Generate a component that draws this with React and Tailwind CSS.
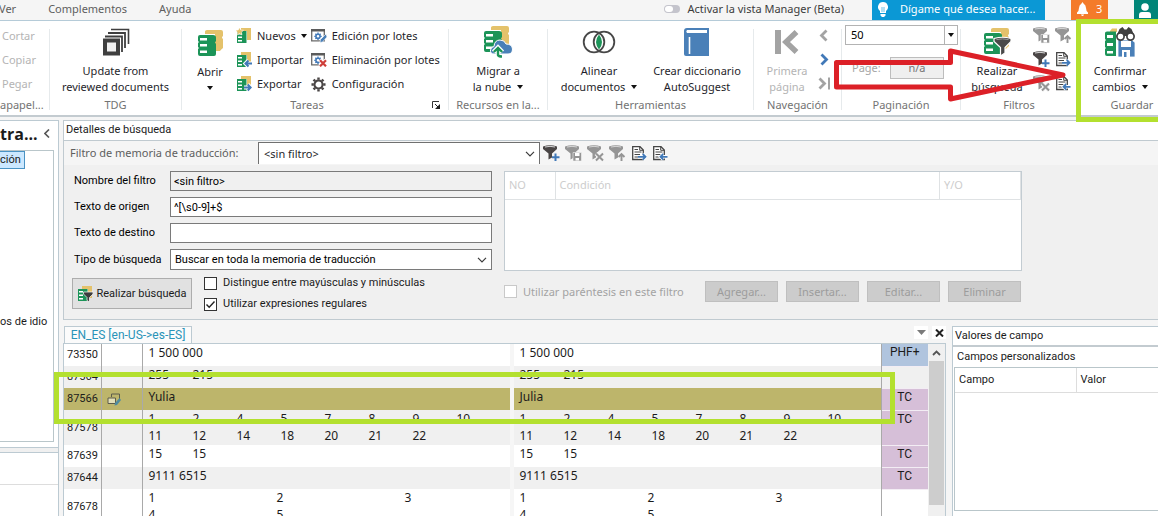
const UI = "font-['Noto_Sans',sans-serif]";
const FORM = "font-['Roboto',sans-serif]";

/* ---------- icons ---------- */

function MemoryShapes() {
  return (
    <>
      <path d="M7 1.500 Q7 0 9 0 H23 Q25 0 25 2 V6 Q23 7.500 25 9 V18 Q23 19.500 22 21 H17 V4 H7 Z" fill="#e4c26b" />
      <path d="M0 7 Q0 5 2 5 H15 Q18 5 18 7.500 V11 L17 12.500 L18 14 V24 Q18 26 16 26 H2 Q0 26 0 24 V19 L1 18 L0 17 V13 L1 12 L0 11 Z" fill="#1c9458" />
      <path d="M2 8 H9 V10.500 H2 Z M2 14 H9 V16.500 H2 Z M2 20.500 H9 V23 H2 Z" fill="#fff" />
    </>
  );
}

function MemoryIcon() {
  return (
    <svg width="25" height="26" viewBox="0 0 25 26" aria-hidden="true">
      <MemoryShapes />
    </svg>
  );
}

function SmallMemoryIcon({ badge }) {
  return (
    <svg width="16" height="16" viewBox="0 0 16 16" aria-hidden="true">
      <path d="M5 0 H15 V12 H11 V3 H5 Z" fill="#e4c26b" />
      <path d="M1 3 H10.500 V15 H1 Z" fill="#1c9458" />
      <path d="M2 5 H6 V6.500 H2 Z M2 8.500 H6 V10 H2 Z M2 12 H6 V13.500 H2 Z" fill="#fff" />
      {badge === "star" && (
        <path d="M3.500 -0.500 L4.700 2 L7.500 2.300 L5.500 4.200 L6 7 L3.500 5.600 L1 7 L1.500 4.200 L-0.500 2.300 L2.300 2 Z" fill="#e4c26b" stroke="#fff" strokeWidth="0.500" />
      )}
      {badge === "in" && (
        <>
          <path d="M16 11.500 H10 M12.500 8.500 L9.500 11.500 L12.500 14.500" fill="none" stroke="#fff" strokeWidth="4" />
          <path d="M16 11.500 H10 M12.500 8.500 L9.500 11.500 L12.500 14.500" fill="none" stroke="#4179b8" strokeWidth="2" />
        </>
      )}
      {badge === "out" && (
        <>
          <path d="M8 11.500 H14.500 M11.700 8.500 L14.700 11.500 L11.700 14.500" fill="none" stroke="#fff" strokeWidth="4" />
          <path d="M8 11.500 H14.500 M11.700 8.500 L14.700 11.500 L11.700 14.500" fill="none" stroke="#4179b8" strokeWidth="2" />
        </>
      )}
      {badge === "filter" && (
        <path d="M6.500 6 H16 V8 L12.500 11.500 V16 L10 14.500 V11.500 L6.500 8 Z" fill="#3c3c3c" stroke="#fff" strokeWidth="0.700" />
      )}
    </svg>
  );
}

function UpdateIcon() {
  return (
    <svg width="28" height="28" viewBox="0 0 28 28" aria-hidden="true" fill="none" stroke="#3f3f3f">
      <path d="M9 1.500 H26.500 V16" strokeWidth="1.600" />
      <path d="M6 5 H23 V20" strokeWidth="1.800" />
      <path d="M3 8.500 H20 V24" strokeWidth="1.800" />
      <rect x="3" y="12.500" width="13" height="13" strokeWidth="4" fill="#f0f0f0" />
    </svg>
  );
}

function CloudIcon() {
  return (
    <svg width="29" height="33" viewBox="0 0 29 33" aria-hidden="true">
      <MemoryShapes />
      <path d="M10 28 Q6 28 6.500 24 Q7 21 10 20.500 Q10.500 14 16 14 Q20.500 14 22 18 Q28 18 28.500 23 Q28.500 28 24 28 H12 Z" fill="#4a80b8" stroke="#fff" strokeWidth="1" />
      <path d="M9.500 26 L14 21.500 L18.500 26 M14 22 V29 Q14.500 30.500 18 30.500" fill="none" stroke="#fff" strokeWidth="4.500" />
      <path d="M9.800 26 L14 22 L18.200 26 M14 22.500 V29 Q14.500 30.500 18 30.500" fill="none" stroke="#1c9458" strokeWidth="2.400" />
    </svg>
  );
}

function AlignIcon() {
  return (
    <svg width="34" height="24" viewBox="0 0 34 24" aria-hidden="true" fill="none" stroke="#474747" strokeWidth="1.800">
      <path d="M17 4.500 Q23 12 17 19.500 Q11 12 17 4.500 Z" fill="#1c9458" stroke="none" />
      <circle cx="12" cy="12" r="10.300" />
      <circle cx="22" cy="12" r="10.300" />
    </svg>
  );
}

function BookIcon() {
  return (
    <svg width="26" height="28" viewBox="0 0 26 28" aria-hidden="true">
      <path d="M3 0 H25 V28 H2 Q0 28 0 26 V3 Q0 0 3 0 Z" fill="#4a80b8" />
      <path d="M3 2 H23 V5 H3 Q1.500 3.500 3 2 Z" fill="#fff" />
      <path d="M5.500 9 V26" stroke="#fff" strokeWidth="1.600" />
    </svg>
  );
}

function FirstPageIcon() {
  return (
    <svg width="24" height="24" viewBox="0 0 24 24" aria-hidden="true">
      <path d="M0 0 H6 V24 H0 Z" fill="#a3a3a3" />
      <path d="M21.500 2 L11 12 L21.500 22" fill="none" stroke="#a3a3a3" strokeWidth="5.500" />
    </svg>
  );
}

function Chevron({ dir, color, bar = false }) {
  return (
    <svg width="13" height="13" viewBox="0 0 13 13" aria-hidden="true" fill="none" stroke={color} strokeWidth="2.800">
      {dir === "left" ? <path d="M8.500 1.500 L3.500 6.500 L8.500 11.500" /> : <path d={bar ? "M1.500 1.500 L6.500 6.500 L1.500 11.500" : "M3.500 1.500 L8.500 6.500 L3.500 11.500"} />}
      {bar && <path d="M11 0.500 V12.500" strokeWidth="2" />}
    </svg>
  );
}

function SearchFilterIcon() {
  return (
    <svg width="27" height="28" viewBox="0 0 27 28" aria-hidden="true">
      <MemoryShapes />
      <path d="M10 10.500 Q18.500 8 27 10.500 V13.500 L21 19.500 V25 L16.500 28 V19.500 L10 13.500 Z" fill="#4a4a4a" stroke="#fff" strokeWidth="1.200" />
      <path d="M12.500 11.500 Q18.500 10.300 24.500 11.500" fill="none" stroke="#9a9a9a" />
    </svg>
  );
}

function FilterIcon({ badge }) {
  const tone = badge === "add" ? "#4a4646" : "#959595";
  return (
    <svg width="17" height="17" viewBox="0 0 17 17" aria-hidden="true">
      <path d="M0 1.500 Q7 -1 14 1.500 V4 L9 8.500 V12.500 L5.500 14.500 V8.500 L0 4 Z" fill={tone} />
      <path d="M2 2 Q7 0.700 12 2" fill="none" stroke="#d6d6d6" strokeWidth="1" />
      {badge === "add" && <path d="M12.500 8.500 V16 M9 12.200 H16.500" stroke="#4179b8" strokeWidth="2" />}
      {badge === "save" && (
        <>
          <path d="M8 7.500 H16.500 V16 H8 Z" fill="#959595" stroke="#f5f5f5" strokeWidth="0.600" />
          <path d="M10 8 H14.500 V11 H10 Z M10.500 13 H14 V15.500 H10.500 Z" fill="#fff" />
        </>
      )}
      {badge === "clear" && (
        <>
          <path d="M9 8.500 L16 15.500 M16 8.500 L9 15.500" stroke="#f5f5f5" strokeWidth="4" />
          <path d="M9 8.500 L16 15.500 M16 8.500 L9 15.500" stroke="#959595" strokeWidth="2" />
        </>
      )}
      {badge === "up" && <path d="M12.500 16 V9 M9.500 12 L12.500 9 L15.500 12" fill="none" stroke="#959595" strokeWidth="1.900" />}
    </svg>
  );
}

function DocIcon({ dir }) {
  const arrow = dir === "out" ? "M7 11.800 H14.500 M11.700 9 L14.500 11.800 L11.700 14.600" : "M15.500 11.800 H8.500 M11.300 9 L8.500 11.800 L11.300 14.600";
  return (
    <svg width="16" height="17" viewBox="0 0 16 17" aria-hidden="true" fill="none">
      <path d="M1.700 1.700 H9 L12.300 5 V14.500 H1.700 Z" fill="#fff" stroke="#454545" strokeWidth="1.300" />
      <path d="M8.700 1.700 V5.300 H12" stroke="#454545" />
      <path d="M3.500 4.500 H7 M3.500 7 H10.500 M3.500 9.500 H9 M3.500 12 H8" stroke="#454545" />
      <path d={arrow} stroke="#fff" strokeWidth="3.500" />
      <path d={arrow} stroke="#4179b8" strokeWidth="1.800" />
    </svg>
  );
}

function SaveChangesIcon() {
  return (
    <svg width="30" height="30" viewBox="0 0 30 30" aria-hidden="true">
      <path d="M5 4 L7 1.500 H12 V5 H5 Z" fill="#e4c26b" />
      <path d="M0 6 Q0 4.500 2 4.500 H11 V29 H2 Q0 29 0 27 V22 L1 21 L0 20 V14 L1 13 L0 12 Z" fill="#1c9458" />
      <path d="M2 8 H8 V11 H2 Z M2 16 H8 V19 H2 Z M2 24 H8 V26.500 H2 Z" fill="#fff" />
      <path d="M13 13 H27 L30 15.500 V30 H13 Z" fill="#4a80b8" stroke="#fff" strokeWidth="0.800" />
      <path d="M16 14 H26 V20 H16 Z M17 23 H25 V30 H17 Z" fill="#fff" />
      <path d="M19 25 H21.500 V30 H19 Z" fill="#4a80b8" />
      <path d="M14.500 2 L17.500 0 L19.500 2.500 H21.500 L23.500 0 L26.500 2 L29.500 9 H11.500 Z" fill="#3f3f3f" />
      <circle cx="15.500" cy="9.500" r="3.600" fill="#fff" stroke="#3f3f3f" strokeWidth="1.700" />
      <circle cx="25.500" cy="9.500" r="3.600" fill="#fff" stroke="#3f3f3f" strokeWidth="1.700" />
    </svg>
  );
}

function GearIcon() {
  return (
    <svg width="15" height="15" viewBox="0 0 16 16" aria-hidden="true" fill="none" stroke="#4a4646">
      <circle cx="8" cy="8" r="4.300" strokeWidth="2.200" />
      <path d="M8 0.500 V3 M8 13 V15.500 M0.500 8 H3 M13 8 H15.500 M2.700 2.700 L4.500 4.500 M11.500 11.500 L13.300 13.300 M2.700 13.300 L4.500 11.500 M11.500 4.500 L13.300 2.700" strokeWidth="2.600" />
    </svg>
  );
}

function BatchIcon({ remove = false }) {
  return (
    <svg width="16" height="14" viewBox="0 0 16 14" aria-hidden="true">
      <path d="M0.700 0.700 H13.300 V11.800 H0.700 Z" fill="#fff" stroke="#6b6b6b" strokeWidth="1.300" />
      <path d="M0 0 H14 V2.500 H0 Z" fill="#5b5b5b" />
      <circle cx="7" cy="7.300" r="2.100" fill="none" stroke="#4179b8" strokeWidth="1.600" />
      <path d="M7 3.600 V5 M7 9.600 V11 M3.300 7.300 H4.700 M9.300 7.300 H10.700 M4.400 4.700 L5.400 5.700 M4.400 9.900 L5.400 8.900 M9.600 4.700 L8.600 5.700" stroke="#4179b8" strokeWidth="1.300" />
      {remove ? (
        <>
          <path d="M8.500 7 L15 13.300 M15 7 L8.500 13.300" stroke="#fff" strokeWidth="3.500" />
          <path d="M9 7.300 L15 13.300 M15 7.300 L9 13.300" stroke="#cf3f3a" strokeWidth="2.200" />
        </>
      ) : (
        <path d="M15 5 L9.500 10.500 L9 13.500 L11.500 13 L16 8 Z" fill="#4a80b8" stroke="#fff" strokeWidth="0.600" />
      )}
    </svg>
  );
}

function Caret() {
  return (
    <svg width="6" height="4" viewBox="0 0 6 4" aria-hidden="true" className="inline-block shrink-0">
      <path d="M0 0 H6 L3 4 Z" fill="#111" />
    </svg>
  );
}

function DownArrow() {
  return (
    <svg width="10" height="6" viewBox="0 0 10 6" aria-hidden="true" className="pointer-events-none absolute top-1/2 right-1 -translate-y-1/2">
      <path d="M1 0.800 L5 4.800 L9 0.800" fill="none" stroke="#3b3b3b" strokeWidth="1.200" />
    </svg>
  );
}

/* ---------- ribbon ---------- */

function Group({ label, width, children, launcher = false, labelClass = "text-center" }) {
  return (
    <section className={`flex shrink-0 flex-col ${width}`}>
      <div className="flex h-[75px] min-w-0">{children}</div>
      <div className="flex h-[18px] items-center overflow-hidden leading-[18px] text-[#737373]">
        <span className={`flex-1 whitespace-nowrap ${labelClass}`}>{label}</span>
        {launcher && (
          <button aria-label="Tareas" className="mr-2 flex">
            <svg width="8" height="8" viewBox="0 0 8 8" aria-hidden="true">
              <path d="M0.500 7 V0.500 H7" fill="none" stroke="#333" />
              <path d="M8 3 V8 H3 Z" fill="#222" />
              <path d="M3 3 L6 6" stroke="#222" />
            </svg>
          </button>
        )}
      </div>
    </section>
  );
}

function Divider() {
  return <div className="mt-2 h-[81px] w-px shrink-0 bg-[#e6eaec]" />;
}

function BigButton({ icon, lines, caret = false, muted = false, className = "" }) {
  return (
    <button className={`flex flex-col items-center leading-4 whitespace-nowrap ${muted ? "text-[#b4b4b4]" : "text-[#1f1f2b]"} ${className}`}>
      <span className="flex h-[42px] items-center justify-center">{icon}</span>
      {lines.map((line, i) => (
        <span key={line} className="flex h-4 items-center gap-[6px]">
          {line}
          {caret && i === lines.length - 1 && lines.length > 1 && <Caret />}
        </span>
      ))}
      {caret && lines.length === 1 && (
        <span className="flex h-4 items-center">
          <Caret />
        </span>
      )}
    </button>
  );
}

function RowButton({ icon, children, caret = false }) {
  return (
    <button className="flex h-6 items-center gap-[5px] whitespace-nowrap text-[#1f1f2b]">
      <span className="flex w-4 justify-center">{icon}</span>
      {children}
      {caret && <Caret />}
    </button>
  );
}

function TopBar() {
  return (
    <header className="flex h-[21px] shrink-0 items-stretch border-b border-[#b5cbd8] bg-[#f5f5f5] text-[#5e5e5e]">
      <nav className="-ml-px flex gap-8 leading-[18px]">
        <a href="#ver">Ver</a>
        <a href="#complementos">Complementos</a>
        <a href="#ayuda">Ayuda</a>
      </nav>
      <label className="mr-7 ml-auto flex items-center gap-2 pb-[2px] text-[#3c3c3c]">
        <input type="checkbox" role="switch" className="peer sr-only" />
        <span className="flex h-2 w-4 justify-start rounded-full bg-[#c4c4cc] p-px">
          <span className="h-[6px] w-2 rounded-full bg-white" />
        </span>
        Activar la vista Manager (Beta)
      </label>
      <button className="flex w-[173px] items-center gap-3 bg-[#0b98d5] pb-[2px] pl-[6px] text-white">
        <svg width="10" height="15" viewBox="0 0 10 15" aria-hidden="true">
          <path d="M5 0 A5 5 0 0 1 8 9 V11 H2 V9 A5 5 0 0 1 5 0 Z M2.500 12 H7.500 V13.500 L6 15 H4 L2.500 13.500 Z" fill="#fff" />
          <path d="M4 5 V10 M6 5 V10" stroke="#0b98d5" strokeWidth="0.600" />
        </svg>
        Dígame qué desea hacer...
      </button>
      <button className="mr-[26px] ml-[26px] flex w-[37px] items-center gap-2 bg-[#f47b2a] pb-[2px] pl-[6px] text-white">
        <svg width="11" height="14" viewBox="0 0 11 14" aria-hidden="true">
          <path d="M5.500 0 L6.500 1.500 Q9 3 9 6 Q9 9 11 10.500 V12 H0 V10.500 Q2 9 2 6 Q2 3 4.500 1.500 Z M4 12.500 H7 Q6.500 14 5.500 14 Q4.500 14 4 12.500 Z" fill="#fff" />
        </svg>
        3
      </button>
      <button aria-label="Cuenta" className="flex w-6 items-center bg-[#008578] pl-[5px]">
        <svg width="12" height="15" viewBox="0 0 12 15" aria-hidden="true" fill="#fff">
          <circle cx="6" cy="4" r="3.800" />
          <path d="M0 15 V12 Q0 9 3 9 H9 Q12 9 12 12 V15 Z" />
        </svg>
      </button>
    </header>
  );
}

function Ribbon() {
  return (
    <div className="flex h-24 shrink-0 overflow-hidden border-b-2 border-[#c3cbd0] bg-white">
      <Group label="apapel..." width="w-[49px]" labelClass="pr-[6px] text-right">
        <div className="flex flex-col pt-[3px] pl-[2px] text-[#b4b4b4]">
          <button className="h-6 text-left">Cortar</button>
          <button className="h-6 text-left">Copiar</button>
          <button className="h-6 text-left">Pegar</button>
        </div>
      </Group>
      <Divider />
      <Group label="TDG" width="w-[131px]">
        <BigButton className="w-full" icon={<UpdateIcon />} lines={["Update from", "reviewed documents"]} />
      </Group>
      <Divider />
      <Group label="Tareas" width="w-[266px]" launcher>
        <BigButton className="ml-[10px] w-9 pt-px" icon={<MemoryIcon />} lines={["Abrir"]} caret />
        <div className="ml-2 flex flex-col pt-[3px]">
          <RowButton icon={<SmallMemoryIcon badge="star" />} caret>Nuevos</RowButton>
          <RowButton icon={<SmallMemoryIcon badge="in" />}>Importar</RowButton>
          <RowButton icon={<SmallMemoryIcon badge="out" />}>Exportar</RowButton>
        </div>
        <div className="ml-1 flex flex-col pt-[3px]">
          <RowButton icon={<BatchIcon />}>Edición por lotes</RowButton>
          <RowButton icon={<BatchIcon remove />}>Eliminación por lotes</RowButton>
          <RowButton icon={<GearIcon />}>Configuración</RowButton>
        </div>
      </Group>
      <Divider />
      <Group label="Recursos en la..." width="w-[98px]">
        <BigButton className="w-full" icon={<CloudIcon />} lines={["Migrar a", "la nube"]} caret />
      </Group>
      <Divider />
      <Group label="Herramientas" width="w-[205px]">
        <BigButton className="ml-2 w-[86px]" icon={<AlignIcon />} lines={["Alinear", "documentos"]} caret />
        <BigButton className="w-[110px]" icon={<BookIcon />} lines={["Crear diccionario", "AutoSuggest"]} />
      </Group>
      <Divider />
      <Group label="Navegación" width="w-[87px]">
        <BigButton className="ml-3 w-[42px]" icon={<FirstPageIcon />} lines={["Primera", "página"]} muted />
        <div className="ml-[10px] flex flex-col pt-[2px]">
          <button aria-label="Anterior" className="flex h-6 items-center"><Chevron dir="left" color="#a3a3a3" /></button>
          <button aria-label="Siguiente" className="flex h-6 items-center"><Chevron dir="right" color="#4179b8" /></button>
          <button aria-label="Última" className="flex h-6 items-center"><Chevron dir="right" color="#a3a3a3" bar /></button>
        </div>
      </Group>
      <Divider />
      <Group label="Paginación" width="w-[118px]">
        <div className="flex w-full flex-col gap-3 pt-1 pr-[2px] pl-[3px]">
          <div className="relative h-5 border border-[#b3b3b3]">
            <select aria-label="Resultados por página" className="h-full w-full appearance-none bg-white pl-[5px] text-[11px] text-black">
              <option>50</option>
            </select>
            <span className="pointer-events-none absolute inset-y-0 right-0 flex w-[13px] items-center justify-center border-l border-[#b3b3b3]">
              <Caret />
            </span>
          </div>
          <div className="flex items-center pl-[7px] text-[#a6a6a6]">
            <span className="w-[38px]">Page:</span>
            <button className="h-[22px] w-[54px] border border-[#bdbdbd] bg-[#efefef] text-[#777]">n/a</button>
          </div>
        </div>
      </Group>
      <Divider />
      <Group label="Filtros" width="w-[116px]">
        <BigButton className="ml-2 w-[56px]" icon={<SearchFilterIcon />} lines={["Realizar", "búsqueda"]} />
        <div className="ml-2 grid h-[74px] grid-cols-[22px_22px] items-center pt-[2px]">
          <button aria-label="Guardar filtro"><FilterIcon badge="save" /></button>
          <button aria-label="Subir filtro"><FilterIcon badge="up" /></button>
          <button aria-label="Agregar filtro"><FilterIcon badge="add" /></button>
          <button aria-label="Exportar filtro"><DocIcon dir="out" /></button>
          <button aria-label="Quitar filtro"><FilterIcon badge="clear" /></button>
          <button aria-label="Importar filtro"><DocIcon dir="in" /></button>
        </div>
      </Group>
      <Divider />
      <Group label="Guardar" width="w-[108px]">
        <BigButton className="ml-[10px] w-16" icon={<SaveChangesIcon />} lines={["Confirmar", "cambios"]} caret />
      </Group>
    </div>
  );
}

/* ---------- search form ---------- */

const inputBox = "h-5 w-full border border-[#7a7a7a] px-[3px] text-[11px] text-black";

function Check({ children, muted = false, ...rest }) {
  return (
    <label className={`flex items-center gap-[6px] whitespace-nowrap ${muted ? "text-[#a3a3a3]" : "text-[#1b1b1b]"}`}>
      <span className="relative flex">
        <input
          type="checkbox"
          className={`peer size-[13px] appearance-none border bg-white ${muted ? "border-[#c9c9c9]" : "border-[#333]"}`}
          {...rest}
        />
        <svg width="13" height="13" viewBox="0 0 13 13" aria-hidden="true" className="pointer-events-none absolute inset-0 hidden peer-checked:block">
          <path d="M2.500 6.500 L5.200 9.300 L10.500 3.500" fill="none" stroke="#222" strokeWidth="1.400" />
        </svg>
      </span>
      {children}
    </label>
  );
}

function SearchDetails() {
  return (
    <section className="shrink-0 border border-r-0 border-[#c0cad0] bg-[#f0f0f0]">
      <h2 className={`h-5 border-b border-[#c0cad0] bg-white pl-[2px] leading-[18px] text-[#1b1b1b] ${FORM}`}>
        Detalles de búsqueda
      </h2>
      <div className="flex h-6 items-center bg-[#f5f5f5] pl-[6px]">
        <label htmlFor="tm-filter" className="w-[188px] text-[#5e5e5e]">
          Filtro de memoria de traducción:
        </label>
        <div className="relative h-[22px] w-[282px] border border-b-0 border-[#707070]">
          <select id="tm-filter" className="h-full w-full appearance-none bg-white pl-[5px] text-[11px] text-[#1f1f2b]">
            <option>&lt;sin filtro&gt;</option>
          </select>
          <DownArrow />
        </div>
        <div className="ml-[3px] flex gap-[5px]">
          <button aria-label="Agregar filtro"><FilterIcon badge="add" /></button>
          <button aria-label="Guardar filtro"><FilterIcon badge="save" /></button>
          <button aria-label="Quitar filtro"><FilterIcon badge="clear" /></button>
          <button aria-label="Subir filtro"><FilterIcon badge="up" /></button>
          <button aria-label="Exportar filtro"><DocIcon dir="out" /></button>
          <button aria-label="Importar filtro"><DocIcon dir="in" /></button>
        </div>
      </div>
      <div className="flex gap-3 px-2 pt-[6px] pb-[7px]">
        <div className={`w-[420px] ${FORM}`}>
          <div className="grid grid-cols-[98px_1fr] items-center gap-y-[6px]">
            <label htmlFor="name" className="pl-[2px]">Nombre del filtro</label>
            <input id="name" readOnly defaultValue="<sin filtro>" className={`${inputBox} bg-[#f0f0f0]`} />
            <label htmlFor="src" className="pl-[2px]">Texto de origen</label>
            <input id="src" defaultValue="^[\s0-9]+$" className={`${inputBox} bg-white`} />
            <label htmlFor="dst" className="pl-[2px]">Texto de destino</label>
            <input id="dst" className={`${inputBox} bg-white`} />
            <label htmlFor="kind" className="pl-[2px]">Tipo de búsqueda</label>
            <div className="relative h-[21px] border border-[#7a7a7a]">
              <select id="kind" className="h-full w-full appearance-none bg-white pl-1 text-[11px] text-black">
                <option>Buscar en toda la memoria de traducción</option>
              </select>
              <DownArrow />
            </div>
          </div>
          <div className="mt-[5px] flex gap-3">
            <button className="mt-[3px] flex h-[31px] w-[120px] items-center justify-center gap-[3px] border border-[#adadad] bg-[#e1e1e1] text-[#1b1b1b]">
              <SmallMemoryIcon badge="filter" />
              Realizar búsqueda
            </button>
            <div className="flex flex-col gap-[5px]">
              <Check>Distingue entre mayúsculas y minúsculas</Check>
              <Check defaultChecked>Utilizar expresiones regulares</Check>
            </div>
          </div>
        </div>
        <div className="flex w-[518px] flex-col">
          <div className="h-[100px] border border-[#c3ccd2] bg-white">
            <table className="w-full table-fixed border-collapse text-left text-[#cdcdcd]">
              <colgroup>
                <col className="w-[50px]" />
                <col />
                <col className="w-[81px]" />
              </colgroup>
              <thead>
                <tr className="h-[27px] border-b border-[#dfe2e4]">
                  <th className="pl-1 font-normal">NO</th>
                  <th className="border-x border-[#dfe2e4] pl-1 font-normal">Condición</th>
                  <th className="border-r border-[#dfe2e4] pl-1 font-normal">Y/O</th>
                </tr>
              </thead>
            </table>
          </div>
          <div className="mt-[10px] flex items-center justify-between pr-px">
            <Check muted disabled>Utilizar paréntesis en este filtro</Check>
            <div className="flex gap-2">
              {["Agregar...", "Insertar...", "Editar...", "Eliminar"].map((name) => (
                <button key={name} disabled className="h-[21px] w-[73px] border border-[#bfbfbf] bg-[#cccccc] text-[#9c9c9c]">
                  {name}
                </button>
              ))}
            </div>
          </div>
        </div>
      </div>
    </section>
  );
}

/* ---------- results ---------- */

const NARROW = "w-11 shrink-0";
const WIDE = "w-32 shrink-0";

const rows = [
  { id: "73350", lines: [["1 500 000"]], status: "PHF+" },
  { id: "87564", lines: [["255", "215"]], status: "" },
  { id: "87566", source: "Yulia", target: "Julia", status: "TC", selected: true },
  { id: "87578", lines: [["1", "2", "4", "5", "7", "8", "9", "10"], ["11", "12", "14", "18", "20", "21", "22"]], status: "TC" },
  { id: "87639", lines: [["15", "15"]], status: "TC" },
  { id: "87644", lines: [["9111 6515"]], status: "TC" },
  { id: "87678", lines: [["1", "2", "3"], ["4", "5"]], wide: true, status: "" },
];

function Segment({ row, side }) {
  const lines = row.lines ?? [[row[side]]];
  return lines.map((line, i) => (
    <div key={i} className="flex h-[17px] leading-[18px] whitespace-nowrap">
      {line.map((part, j) => (
        <span key={j} className={row.wide ? WIDE : line.length > 1 ? NARROW : ""}>
          {part}
        </span>
      ))}
    </div>
  ));
}

function Results() {
  return (
    <section className="flex min-w-0 flex-1 flex-col overflow-hidden">
      <div className="flex h-[17px] shrink-0 items-end pl-px">
        <button className={`h-[17px] w-[128px] border border-b-0 border-[#bccad2] bg-[#fbfbfb] leading-4 text-[#2a93b8] ${FORM} text-[12px]`}>
          EN_ES [en-US-&gt;es-ES]
        </button>
        <div className="mb-1 ml-auto flex items-center gap-1">
          <button aria-label="Lista de pestañas" className="flex h-[13px] w-[14px] items-center justify-center bg-white">
            <svg width="9" height="5" viewBox="0 0 9 5" aria-hidden="true"><path d="M0 0 H9 L4.500 5 Z" fill="#7a7a7a" /></svg>
          </button>
          <button aria-label="Cerrar" className="flex h-[13px] w-[14px] items-center justify-center bg-white">
            <svg width="9" height="8" viewBox="0 0 9 8" aria-hidden="true"><path d="M1 0.500 L8 7.500 M8 0.500 L1 7.500" stroke="#222" strokeWidth="2" /></svg>
          </button>
        </div>
      </div>
      <div className="flex min-h-0 flex-1 overflow-hidden border border-b-0 border-[#bccad2] bg-white">
        <div className="min-w-0 flex-1">
          <table className="w-full table-fixed border-collapse text-[#1b1b1b]">
            <colgroup>
              <col className="w-[37px]" />
              <col className="w-[41px]" />
              <col />
              <col className="w-1" />
              <col />
              <col className="w-[47px]" />
            </colgroup>
            <tbody>
              {rows.map((row, i) => {
                const tone = row.selected ? "bg-[#bdb56b]" : i % 2 ? "bg-[#f0f0f0]" : "bg-white";
                const badge = row.status === "TC" ? "bg-[#d6bfd8]" : row.status ? "bg-[#b0c4de]" : row.selected ? "bg-white" : tone;
                const height = row.lines?.length > 1 ? "h-[35px]" : "h-[22px]";
                return (
                  <tr key={row.id} className={height}>
                    <th scope="row" className={`border-r border-[#a9a9a9] p-0 pl-[3px] text-left text-[11px] font-normal ${tone} ${FORM}`}>{row.id}</th>
                    <td className={`border-r border-[#a9a9a9] p-0 pl-[5px] ${tone}`}>
                      {row.selected && (
                        <svg width="14" height="13" viewBox="0 0 14 13" aria-hidden="true">
                          <path d="M4.500 4 V1 H12.500 V7" fill="none" stroke="#5c5c4c" />
                          <path d="M1 5 H8.500 V10.500 H1 Z" fill="#e3dfb8" stroke="#5c5c4c" />
                          <path d="M12.500 5 L8 10 L7.500 12.500 L10 12 L14 7 Z" fill="#4f8ba0" />
                        </svg>
                      )}
                    </td>
                    <td className={`p-0 pl-[6px] align-top text-[12px] ${tone}`}><Segment row={row} side="source" /></td>
                    <td className="bg-[#f6f6f6] p-0" />
                    <td className={`border-r border-[#a9a9a9] p-0 pl-[6px] align-top text-[12px] ${tone}`}><Segment row={row} side="target" /></td>
                    <td className={`border-b border-[#f3edf4] p-0 text-center align-top text-[12px] leading-4 ${FORM} ${badge}`}>{row.status}</td>
                  </tr>
                );
              })}
            </tbody>
          </table>
        </div>
        <div className="flex w-[17px] shrink-0 flex-col items-center bg-[#f0f0f0]">
          <button aria-label="Subir" className="flex h-[17px] w-full shrink-0 items-center justify-center">
            <svg width="9" height="6" viewBox="0 0 9 6" aria-hidden="true"><path d="M1 5 L4.500 1.500 L8 5" fill="none" stroke="#555" strokeWidth="1.800" /></svg>
          </button>
          <div className="h-36 w-[15px] bg-[#cdcdcd]" />
        </div>
      </div>
    </section>
  );
}

function FieldValues() {
  return (
    <aside className={`flex w-[206px] shrink-0 flex-col border border-r-0 border-b-0 border-[#bccad2] bg-white text-[#1b1b1b] ${FORM}`}>
      <h2 className="h-5 border-b-2 border-[#c3cbd0] pl-[2px] leading-[18px]">Valores de campo</h2>
      <h3 className="pl-1 leading-5">Campos personalizados</h3>
      <div className="ml-px h-36 border border-r-0 border-[#b9c6ca]">
        <table className="w-full table-fixed border-collapse text-left">
          <thead>
            <tr className="h-6 border-b border-[#dddddd]">
              <th className="w-[121px] border-r border-[#dddddd] pl-1 font-normal">Campo</th>
              <th className="pl-1 font-normal">Valor</th>
            </tr>
          </thead>
        </table>
      </div>
    </aside>
  );
}

function Sidebar() {
  return (
    <aside className="flex w-[59px] shrink-0 flex-col overflow-hidden border-t border-r border-[#bccad2] bg-white">
      <div className="flex h-[29px] items-center justify-between pr-2 pb-1">
        <h1 className="font-['Open_Sans',sans-serif] text-[16px] leading-6 font-bold text-[#1b1b1b]">tra...</h1>
        <button aria-label="Contraer panel">
          <svg width="6" height="9" viewBox="0 0 6 9" aria-hidden="true"><path d="M5 0.500 L1 4.500 L5 8.500" fill="none" stroke="#555" strokeWidth="1.600" /></svg>
        </button>
      </div>
      <div className={`mr-1 flex h-[292px] shrink-0 flex-col justify-between border-t border-r border-b border-[#b9c6ca] pb-[111px] text-[#1b1b1b] ${FORM}`}>
        <a href="#seleccion" className="h-[18px] w-[25px] border border-l-0 border-[#4a93c4] bg-[#cce8ff] leading-4">ción</a>
        <span className="leading-4 whitespace-nowrap">os de idio</span>
      </div>
      <div className="mt-[5px] h-[6px] shrink-0 border-y border-[#bccad2] bg-[#f0f0f0]" />
      <div className="h-8 shrink-0 border-b border-[#dddddd]" />
    </aside>
  );
}

/* ---------- page ---------- */

export default function App() {
  return (
    <div className={`relative flex h-screen flex-col overflow-hidden bg-[#f5f5f5] text-[11px] leading-4 ${UI}`}>
      <TopBar />
      <Ribbon />
      <div className="flex min-h-0 flex-1 gap-1 pt-[3px]">
        <Sidebar />
        <main className="flex min-w-0 flex-1 flex-col gap-[6px]">
          <SearchDetails />
          <div className="flex min-h-0 flex-1 gap-[6px]">
            <Results />
            <FieldValues />
          </div>
        </main>
      </div>

      <div className="pointer-events-none absolute top-[372px] right-[263px] left-[54px] h-[52px] border-5 border-[#b3e02f]" />
      <div className="pointer-events-none absolute top-[19px] left-[1076px] h-[103px] w-[120px] border-5 border-[#b3e02f]" />
      <svg width="240" height="58" viewBox="0 0 240 58" aria-hidden="true" className="pointer-events-none absolute top-[46px] left-[832px]">
        <path d="M4.500 16.500 H118.500 V5 L231 29 L118.500 53 V41 H4.500 Z" fill="none" stroke="#dc2027" strokeWidth="5" strokeLinejoin="round" />
      </svg>
    </div>
  );
}
